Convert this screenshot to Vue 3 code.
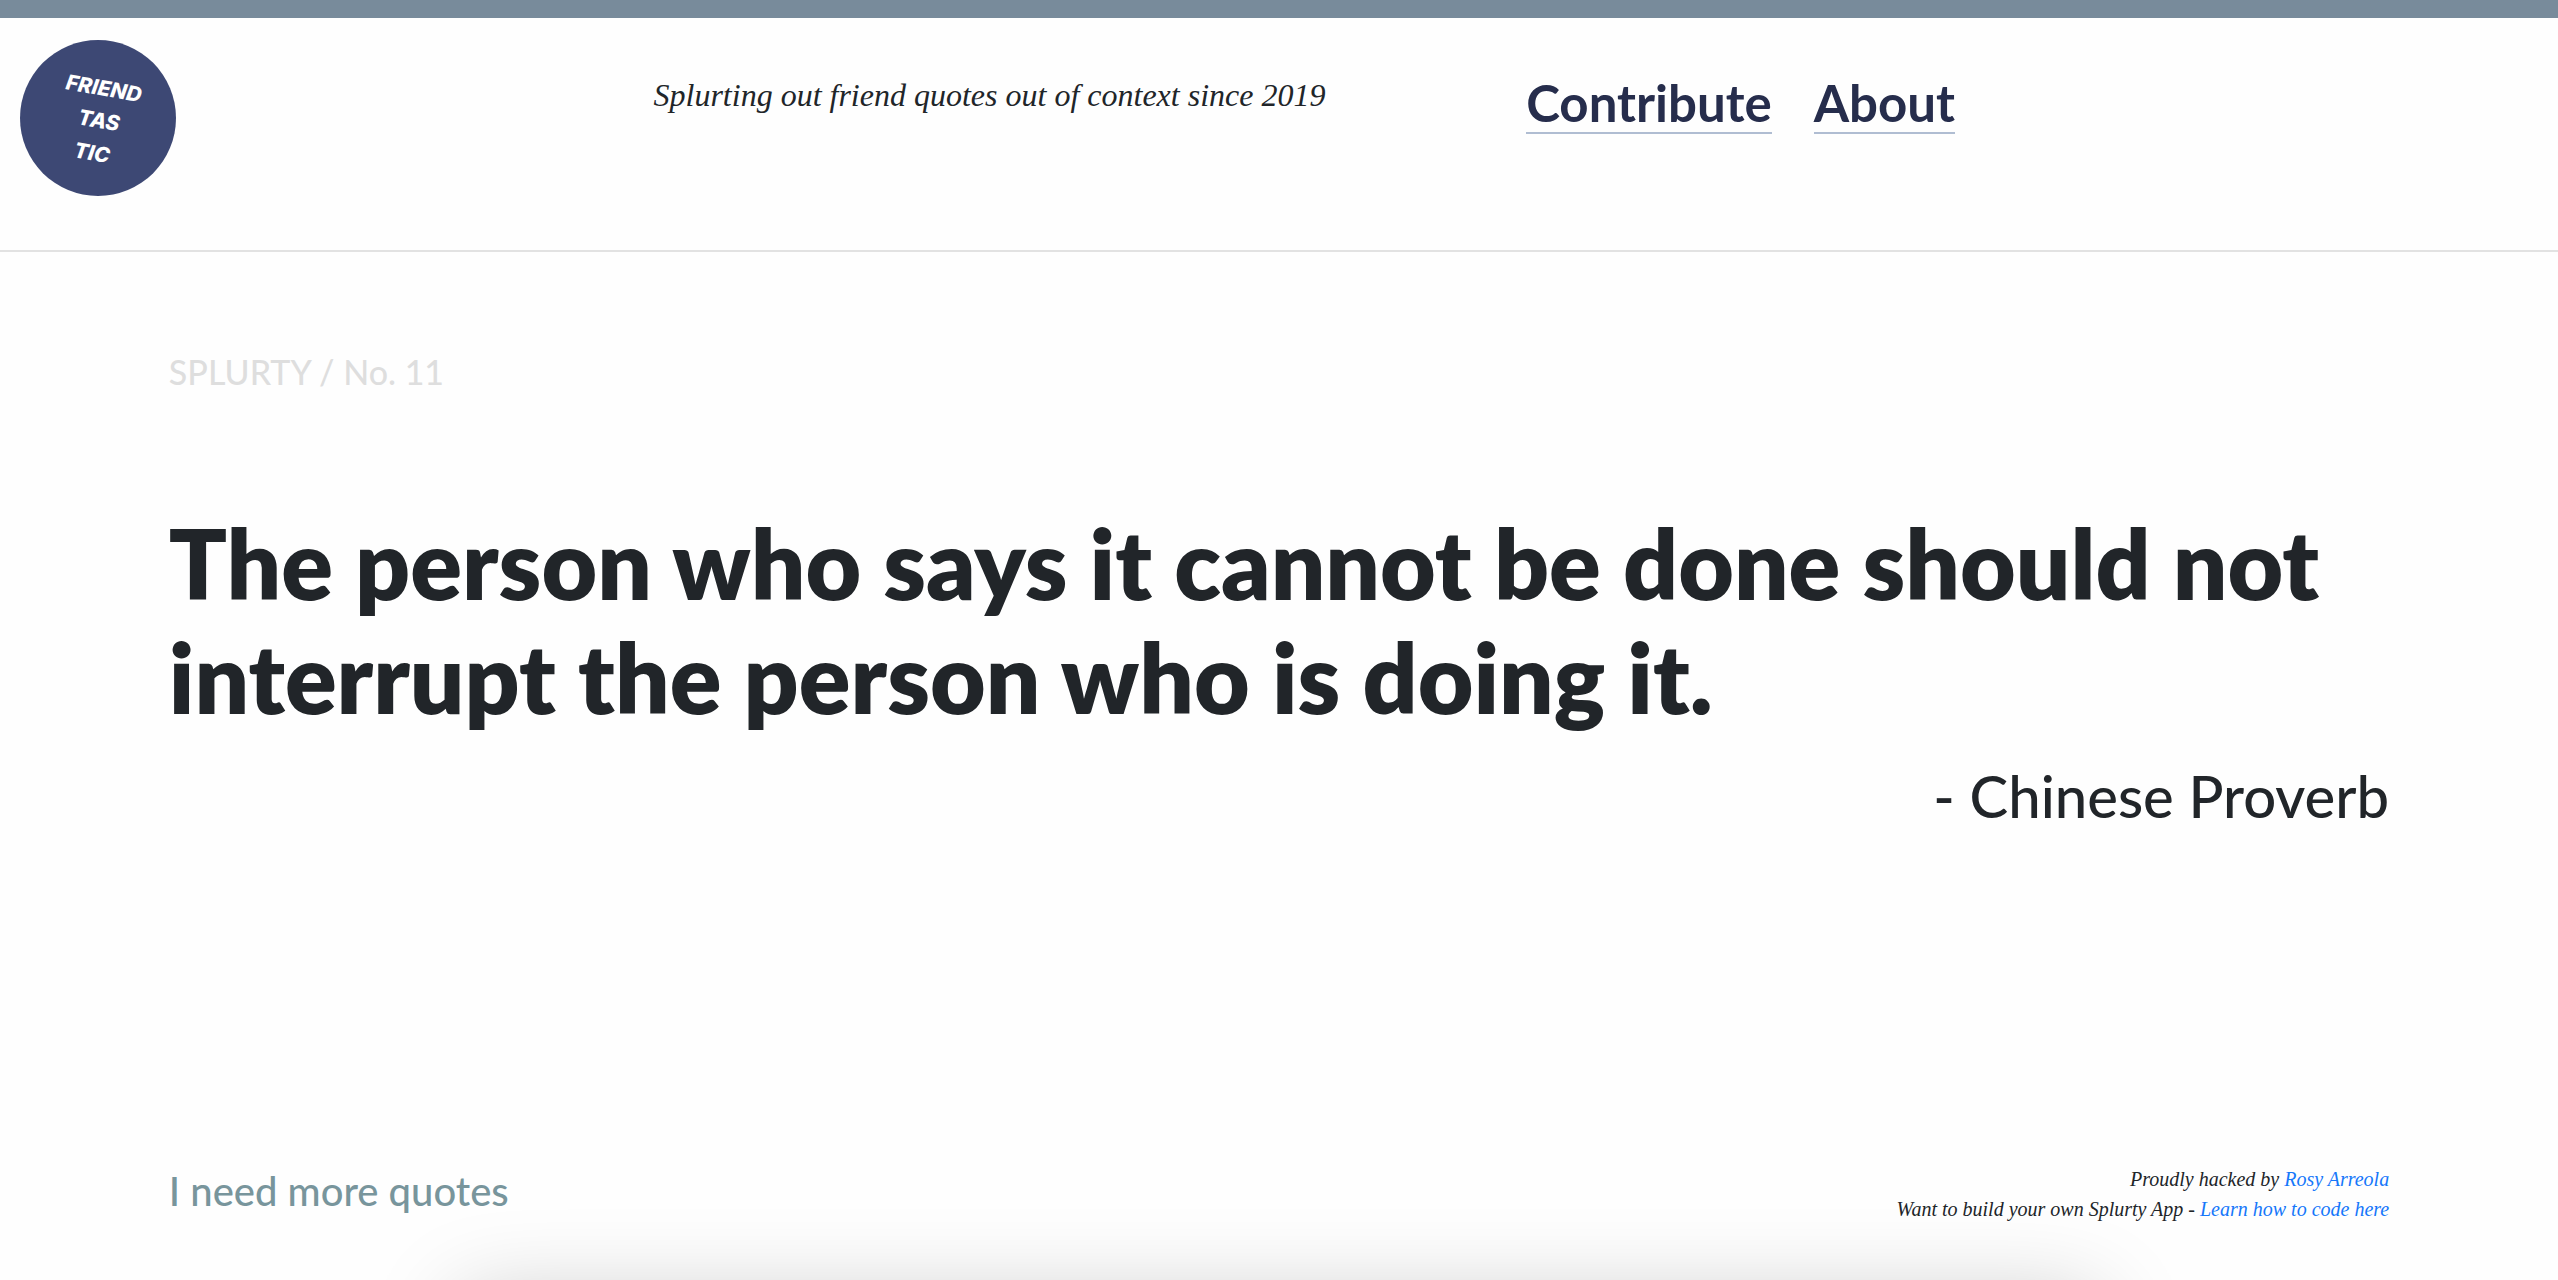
<script setup>
const logoLines = [
  { text: 'FRIEND', x: 45, y: 49 },
  { text: 'TAS', x: 57, y: 84 },
  { text: 'TIC', x: 53, y: 117 },
]
const navLinks = ['Contribute', 'About']
</script>

<template>
  <div class="page">
    <header class="site-header">
      <a class="logo" href="#" aria-label="Friendtastic">
        <svg width="156" height="156" viewBox="0 0 156 156">
          <circle cx="78" cy="78" r="78" fill="#3d4874" />
          <text
            v-for="line in logoLines"
            :key="line.text"
            class="logo-text"
            :transform="`translate(${line.x} ${line.y}) rotate(10)`"
          >{{ line.text }}</text>
        </svg>
      </a>
      <p class="tagline">Splurting out friend quotes out of context since 2019</p>
      <nav class="nav">
        <a v-for="link in navLinks" :key="link" href="#">{{ link }}</a>
      </nav>
    </header>

    <main class="content">
      <p class="issue">SPLURTY / No. 11</p>
      <blockquote class="quote">
        <h1>The person who says it cannot be done should not interrupt the person who is doing it.</h1>
        <p class="author">- Chinese Proverb</p>
      </blockquote>
    </main>

    <footer class="site-footer">
      <a class="more" href="#">I need more quotes</a>
      <div class="credits">
        <p>Proudly hacked by <a href="#">Rosy Arreola</a></p>
        <p>Want to build your own Splurty App - <a href="#">Learn how to code here</a></p>
      </div>
    </footer>
    <div class="bottom-shade" aria-hidden="true"></div>
  </div>
</template>

<style>
body {
  margin: 0;
  background: #fefefe;
}
</style>

<style scoped>
.page {
  position: relative;
  display: flex;
  flex-direction: column;
  box-sizing: border-box;
  min-height: 100vh;
  overflow: hidden;
  border-top: 18px solid #788b9b;
  color: #212529;
  font-family: Lato, sans-serif;
}
p,
h1,
blockquote {
  margin: 0;
}
a {
  text-decoration: none;
}
.site-header {
  display: grid;
  grid-template-columns: 3fr 4fr 5fr;
  align-items: start;
  padding: 22px 0 54px;
  border-bottom: 2px solid #e2e2e2;
}
.logo {
  display: flex;
  padding-left: 20px;
}
.logo-text {
  fill: #fff;
  font: italic 800 21px Inter, sans-serif;
}
.tagline {
  padding: 31px 0 0 14px;
  font: italic 32px/48px "Liberation Serif", serif;
  white-space: nowrap;
}
.nav {
  display: flex;
  gap: 42px;
  padding: 34px 0 0 34px;
}
.nav a {
  border-bottom: 2px solid #b0bdd2;
  color: #262d4c;
  font-size: 51px;
  font-weight: 700;
  line-height: 58px;
}
.content {
  padding: 96px 6.6% 0;
}
.issue {
  color: #dedede;
  font-size: 34px;
  font-weight: 500;
  line-height: 48px;
}
.quote {
  margin-top: 110px;
}
.quote h1 {
  font-size: 96px;
  font-weight: 800;
  line-height: 114px;
}
.author {
  padding-top: 24px;
  font-size: 58px;
  font-weight: 500;
  line-height: 76px;
  text-align: right;
}
.site-footer {
  display: flex;
  justify-content: space-between;
  align-items: flex-start;
  margin-top: auto;
  padding: 0 6.6% 56px;
}
.more {
  color: #78959c;
  font-size: 40px;
  font-weight: 500;
  line-height: 54px;
}
.credits {
  font: italic 20px/30px "Liberation Serif", serif;
  text-align: right;
}
.credits a {
  color: #1677fa;
}
.bottom-shade {
  position: absolute;
  right: 18%;
  bottom: -120px;
  left: 18%;
  height: 100px;
  box-shadow: 0 0 90px rgba(0, 0, 0, 0.22);
  pointer-events: none;
}
</style>
